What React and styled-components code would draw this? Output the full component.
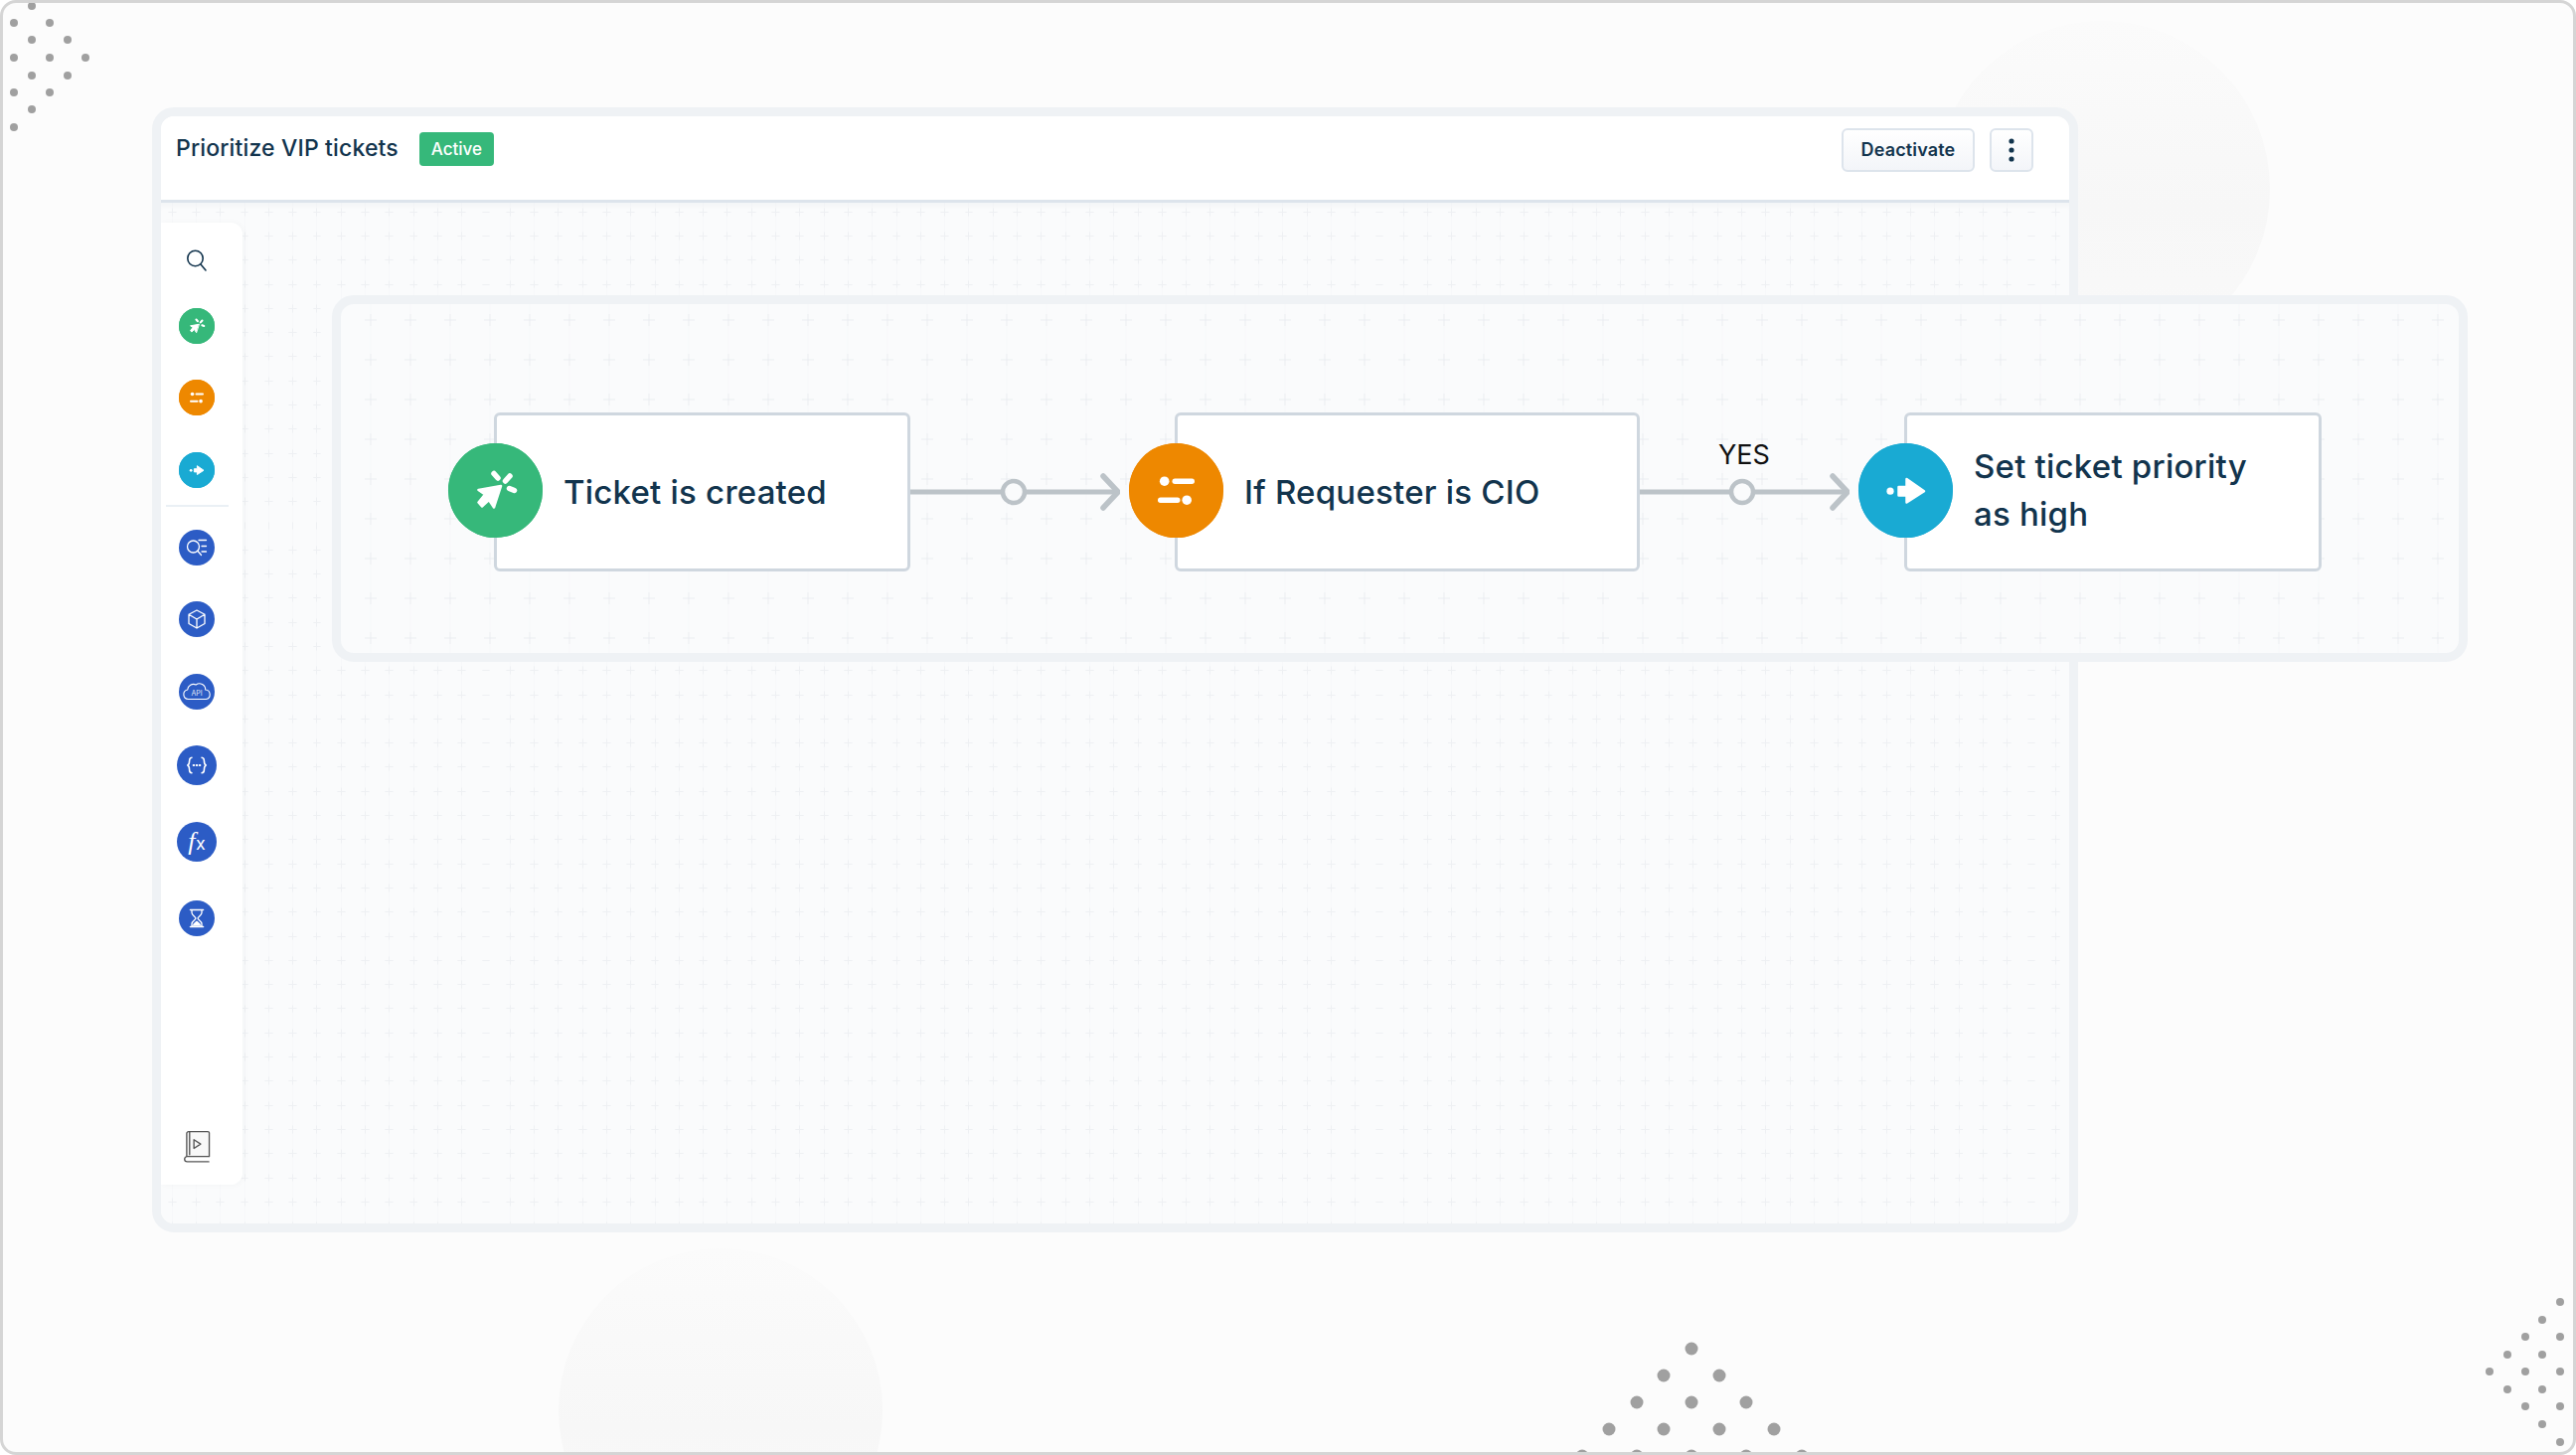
import React from "react";
import styled, { createGlobalStyle } from "styled-components";

const INK = "#12344d";
const GREEN = "#36b87a";
const ORANGE = "#ee8800";
const CYAN = "#19aad3";
const BLUE = "#2c5cc5";

const plusTile = (size, arm, color) => {
  const c = size / 2;
  const svg = `<svg xmlns='http://www.w3.org/2000/svg' width='${size}' height='${size}'><path d='M${c} 0V${size}' stroke='#f7f8fa' stroke-width='1'/><path d='M${c - arm} ${c}H${c + arm}M${c} ${c - arm}V${c + arm}' stroke='${color}' stroke-width='1'/></svg>`;
  return `url("data:image/svg+xml,${encodeURIComponent(svg)}")`;
};

const GlobalStyle = createGlobalStyle`
  html, body {
    margin: 0;
    padding: 0;
    background: #fff;
  }
  body {
    font-family: Inter, "Liberation Sans", sans-serif;
    color: ${INK};
  }
`;

const Frame = styled.div`
  position: relative;
  box-sizing: border-box;
  width: 2592px;
  height: 1464px;
  padding: 105px 0 0 150px;
  overflow: hidden;
  background: #fcfcfc;
  border: 3px solid #d5d5d5;
  border-radius: 16px;
`;

const Blob = styled.div`
  position: absolute;
  left: ${(p) => p.$x - p.$r - 3}px;
  top: ${(p) => p.$y - p.$r - 3}px;
  width: ${(p) => p.$r * 2}px;
  height: ${(p) => p.$r * 2}px;
  border-radius: 50%;
  background: linear-gradient(to bottom, #fbfbfb, #f7f7f7 55%, #f9f9f9);
`;

const DotField = styled.svg`
  position: absolute;
  left: -3px;
  top: -3px;
  width: 2592px;
  height: 1464px;
`;

const EditorWindow = styled.div`
  position: relative;
  box-sizing: border-box;
  width: 1938px;
  height: 1132px;
  display: flex;
  flex-direction: column;
  overflow: hidden;
  border: 9px solid #eff2f5;
  border-radius: 22px;
`;

const Header = styled.header`
  box-sizing: border-box;
  flex: none;
  height: 87px;
  display: flex;
  align-items: flex-start;
  justify-content: space-between;
  padding: 12px 36px 0 15px;
  background: #fff;
  border-bottom: 3px solid #dde4ec;
`;

const TitleGroup = styled.div`
  display: flex;
  align-items: center;
  gap: 21px;
  margin-top: 4px;
`;

const Title = styled.h1`
  margin: -2px 0 0;
  font-size: 23px;
  font-weight: 500;
  letter-spacing: 0.15px;
  color: ${INK};
`;

const StatusBadge = styled.span`
  box-sizing: border-box;
  width: 75px;
  height: 34px;
  display: flex;
  align-items: center;
  justify-content: center;
  border-radius: 4px;
  background: ${GREEN};
  color: #fff;
  font-size: 17px;
  font-weight: 500;
`;

const Actions = styled.div`
  display: flex;
  gap: 15px;
`;

const Button = styled.button`
  box-sizing: border-box;
  height: 44px;
  width: ${(p) => p.$width}px;
  display: flex;
  align-items: center;
  justify-content: center;
  padding: 0 0 1px;
  border: 2px solid #dde4ec;
  border-radius: 6px;
  background: linear-gradient(to bottom, #fff, #f3f5f9);
  color: ${INK};
  font-family: inherit;
  font-size: 18px;
  font-weight: 600;
  letter-spacing: 0.15px;
`;

const Canvas = styled.div`
  flex: 1;
  display: flex;
  align-items: flex-start;
  padding-top: 20px;
  background-color: #fafbfc;
  background-image: ${plusTile(24.3, 4, "#eef0f3")};
  background-position: -1px -3px;
  box-shadow: inset 0 6px 6px -4px rgba(18, 52, 77, 0.04);
`;

const Palette = styled.aside`
  box-sizing: border-box;
  width: 82px;
  height: 968px;
  display: flex;
  flex-direction: column;
  align-items: center;
  padding: 0 10px 0 0;
  background: rgba(255, 255, 255, 0.95);
  border-radius: 0 12px 12px 0;
  box-shadow: 2px 0 6px rgba(18, 52, 77, 0.03);
`;

const PaletteSlot = styled.div`
  flex: none;
  height: ${(p) => p.$height}px;
  display: flex;
  align-items: center;
  justify-content: center;
`;

const PaletteDivider = styled.div`
  flex: none;
  width: 63px;
  height: 2px;
  background: #eaf0f5;
`;

const PaletteSpacer = styled.div`
  flex: 1;
`;

const IconDisc = styled.span`
  flex: none;
  display: block;
  width: ${(p) => p.$size}px;
  height: ${(p) => p.$size}px;
  border-radius: 50%;
  background: ${(p) => p.$color};
`;

const DiscSvg = styled.svg`
  display: block;
  width: 100%;
  height: 100%;
`;

const FlowPanel = styled.section`
  position: absolute;
  left: 331px;
  top: 294px;
  box-sizing: border-box;
  width: 2149px;
  height: 369px;
  display: flex;
  align-items: flex-start;
  padding: 109px 0 0 108px;
  background-color: #fafbfc;
  background-image: ${plusTile(40, 6, "#ebeef1")};
  background-position: 10px -4px;
  border: 9px solid #eff2f5;
  border-radius: 22px;
`;

const Node = styled.div`
  flex: none;
  display: flex;
  align-items: center;
`;

const NodeDisc = styled(IconDisc)`
  position: relative;
  z-index: 1;
  margin: 0 -49px 4px 0;
`;

const NodeCard = styled.div`
  box-sizing: border-box;
  width: ${(p) => p.$width}px;
  height: 160px;
  display: flex;
  align-items: center;
  padding: 0 0 ${(p) => (p.$twoLines ? 5 : 0)}px 67px;
  background: #fff;
  border: 3px solid #cfd7df;
  border-radius: 6px;
  font-size: 33px;
  font-weight: 450;
  line-height: 48px;
  letter-spacing: 0.22px;
  color: ${INK};
`;

const Connector = styled.div`
  position: relative;
  flex: none;
  width: 211px;
  height: 160px;
  margin-right: 9px;
`;

const ConnectorSvg = styled.svg`
  display: block;
  width: 211px;
  height: 160px;
`;

const EdgeLabel = styled.span`
  position: absolute;
  left: 79px;
  top: 27px;
  font-size: 27px;
  line-height: 32px;
  color: #111;
`;

const DOTS = {
  small: [
    [32, 6], [14, 23], [50, 23], [32, 40], [68, 40], [14, 58], [50, 58], [86, 58],
    [32, 76], [68, 76], [14, 93], [50, 93], [32, 110], [14, 128],
    [2576, 1310], [2558, 1328], [2541, 1345], [2576, 1345], [2523, 1363], [2558, 1363],
    [2505, 1380], [2541, 1380], [2576, 1380], [2523, 1398], [2558, 1398], [2541, 1415],
    [2576, 1415], [2558, 1433], [2576, 1451],
  ],
  large: [
    [1702, 1357], [1674, 1384], [1730, 1384], [1647, 1411], [1702, 1411], [1757, 1411],
    [1619, 1438], [1674, 1438], [1730, 1438], [1785, 1438],
    [1592, 1465], [1647, 1465], [1702, 1465], [1757, 1465], [1813, 1465],
  ],
};

// node glyphs share one 95 unit box so the palette can reuse them scaled down
const TriggerGlyph = () => (
  <g fill="#fff" stroke="#fff" strokeLinecap="round" strokeLinejoin="round">
    <path d="M5.5 -4.5 L-17 -0.5 L-10.5 4 L-17 12 L-13.5 16 L-6.5 9.5 L-1.5 17 Z" strokeWidth="2.5" />
    <path d="M-1.5 -17 L2.5 -12.5 M14.5 -14.5 L10 -9.5 M14 -2 L19 0" strokeWidth="5.5" fill="none" />
  </g>
);

const ConditionGlyph = () => (
  <g fill="#fff">
    <circle cx="-11.8" cy="-9.3" r="4.8" />
    <rect x="-4" y="-12" width="22.5" height="5.4" rx="2.7" />
    <rect x="-18.5" y="7" width="22.5" height="5.4" rx="2.7" />
    <circle cx="10.7" cy="9.7" r="4.8" />
  </g>
);

const ActionGlyph = () => (
  <g fill="#fff" stroke="#fff" strokeLinejoin="round">
    <circle cx="-15.5" cy="0.7" r="3.6" stroke="none" />
    <path d="M-7 -3.5 H1 V-11.5 L18.5 0.7 L1 12 V5 H-7 Z" strokeWidth="2.5" />
  </g>
);

const NodeIcon = ({ color, children }) => (
  <DiscSvg viewBox="-47.5 -47.5 95 95" aria-hidden="true">
    <circle r="47.5" fill={color} />
    {children}
  </DiscSvg>
);

const SearchIcon = () => (
  <svg width="22" height="24" viewBox="0 0 22 24" fill="none" stroke={INK} strokeWidth="1.6" strokeLinecap="round">
    <circle cx="9.5" cy="10" r="7.7" />
    <path d="M15 16 L20 22" />
  </svg>
);

const StrokeDisc = ({ size, children }) => (
  <IconDisc $size={size} $color={BLUE}>
    <DiscSvg viewBox="0 0 36 36" fill="none" stroke="#fff" strokeWidth="1.1" strokeLinecap="round" strokeLinejoin="round">
      {children}
    </DiscSvg>
  </IconDisc>
);

const BookIcon = () => (
  <svg width="27" height="34" viewBox="0 0 28 34" fill="none" stroke="#555" strokeWidth="1.4" strokeLinejoin="round" strokeLinecap="round">
    <rect x="3" y="1" width="23.5" height="26" fill="#f8f8f8" stroke="none" />
    <path d="M3 27 V3 a2 2 0 0 1 2 -2 H25 a1.5 1.5 0 0 1 1.5 1.5 V27 H3.5 a2.5 2.5 0 0 0 0 5.5 H26" />
    <path d="M6 2 V25" />
    <path d="M10.5 9.5 L17.5 14 L10.5 18.5 Z" />
  </svg>
);

const KebabIcon = () => (
  <svg width="6" height="24" viewBox="0 0 6 24" fill={INK}>
    <circle cx="3" cy="3" r="2.6" />
    <circle cx="3" cy="12" r="2.6" />
    <circle cx="3" cy="21" r="2.6" />
  </svg>
);

const Arrow = ({ knobAt, label }) => (
  <>
    <ConnectorSvg viewBox="0 0 211 160" fill="none" stroke="#bcc3c8" strokeLinecap="round" strokeLinejoin="round">
      <path d={`M0 80 H${knobAt - 12} M${knobAt + 12} 80 H207`} strokeWidth="5" strokeLinecap="butt" />
      <circle cx={knobAt} cy="80" r="11" strokeWidth="4.5" />
      <path d="M194 64 L209 80 L194 96" strokeWidth="5.5" />
    </ConnectorSvg>
    {label && <EdgeLabel>{label}</EdgeLabel>}
  </>
);

const App = () => (
  <>
    <GlobalStyle />
    <Frame>
      <Blob $x={2115} $y={190} $r={169} />
      <Blob $x={725} $y={1419} $r={163} />
      <DotField viewBox="0 0 2592 1464" fill="#a0a0a0" aria-hidden="true">
        {DOTS.small.map(([x, y]) => (
          <circle key={`s${x}-${y}`} cx={x} cy={y} r="4" />
        ))}
        {DOTS.large.map(([x, y]) => (
          <circle key={`l${x}-${y}`} cx={x} cy={y} r="6.5" />
        ))}
      </DotField>

      <EditorWindow>
        <Header>
          <TitleGroup>
            <Title>Prioritize VIP tickets</Title>
            <StatusBadge>Active</StatusBadge>
          </TitleGroup>
          <Actions>
            <Button $width={134}>Deactivate</Button>
            <Button $width={44} aria-label="More">
              <KebabIcon />
            </Button>
          </Actions>
        </Header>
        <Canvas>
          <Palette>
            <PaletteSlot $height={76}>
              <SearchIcon />
            </PaletteSlot>
            <PaletteSlot $height={56}>
              <IconDisc $size={36} $color={GREEN}>
                <NodeIcon color={GREEN}><TriggerGlyph /></NodeIcon>
              </IconDisc>
            </PaletteSlot>
            <PaletteSlot $height={88}>
              <IconDisc $size={36} $color={ORANGE}>
                <NodeIcon color={ORANGE}><ConditionGlyph /></NodeIcon>
              </IconDisc>
            </PaletteSlot>
            <PaletteSlot $height={58}>
              <IconDisc $size={36} $color={CYAN}>
                <NodeIcon color={CYAN}><ActionGlyph /></NodeIcon>
              </IconDisc>
            </PaletteSlot>
            <PaletteSlot $height={6} />
            <PaletteDivider />
            <PaletteSlot $height={82}>
              <StrokeDisc size={36}>
                <circle cx="14.5" cy="17" r="6" strokeWidth="1.3" />
                <path d="M19 21.5 L22.5 25.5 M20 10.5 H27.5 M23 16.5 H27.5 M23 22 H27.5" strokeWidth="1.3" />
              </StrokeDisc>
            </PaletteSlot>
            <PaletteSlot $height={62}>
              <StrokeDisc size={36}>
                <path d="M18 9 L26 13.3 V22.5 L18 27 L10 22.5 V13.3 Z M10 13.3 L18 18 L26 13.3 M18 18 V27" strokeWidth="1.3" />
              </StrokeDisc>
            </PaletteSlot>
            <PaletteSlot $height={84}>
              <StrokeDisc size={36}>
                <path d="M9.5 25.5 a4.8 4.8 0 0 1 -0.8 -9.5 a6 6 0 0 1 8.5 -5 a6 6 0 0 1 9.5 5 a4.8 4.8 0 0 1 0.6 9.5 Z" strokeWidth="1.1" />
                <text x="18" y="22" textAnchor="middle" fontFamily="Inter, sans-serif" fontSize="7" fill="#fff" stroke="none" opacity="0.85">API</text>
              </StrokeDisc>
            </PaletteSlot>
            <PaletteSlot $height={64}>
              <StrokeDisc size={40}>
                <path d="M13.5 11 c-2 0 -2.2 1.2 -2.2 3.2 c0 2 -0.4 3.2 -1.6 3.8 c1.2 0.6 1.6 1.8 1.6 3.8 c0 2 0.2 3.2 2.2 3.2 M22.5 11 c2 0 2.2 1.2 2.2 3.2 c0 2 0.4 3.2 1.6 3.8 c-1.2 0.6 -1.6 1.8 -1.6 3.8 c0 2 -0.2 3.2 -2.2 3.2" strokeWidth="1.4" />
                <path d="M15 18 H21" strokeWidth="1.8" strokeDasharray="0.5 2.25" />
              </StrokeDisc>
            </PaletteSlot>
            <PaletteSlot $height={90}>
              <StrokeDisc size={40}>
                <text x="18" y="25" textAnchor="middle" fill="#fff" stroke="none">
                  <tspan fontFamily="'Liberation Serif', serif" fontStyle="italic" fontSize="23">f</tspan>
                  <tspan fontFamily="Inter, sans-serif" fontSize="16" dx="0.5">x</tspan>
                </text>
              </StrokeDisc>
            </PaletteSlot>
            <PaletteSlot $height={64}>
              <StrokeDisc size={36}>
                <path d="M11.5 9.5 H24.5 M11.5 26.5 H24.5" strokeWidth="1.6" />
                <path d="M13 10 V12.5 C13 15 17 16.5 17 18 C17 19.5 13 21 13 23.5 V26 H23 V23.5 C23 21 19 19.5 19 18 C19 16.5 23 15 23 12.5 V10" strokeWidth="1.3" />
                <path d="M14 25 C14 23 17 21.5 18 20.5 C19 21.5 22 23 22 25 Z" fill="#fff" stroke="none" />
              </StrokeDisc>
            </PaletteSlot>
            <PaletteSpacer />
            <PaletteSlot $height={34}>
              <BookIcon />
            </PaletteSlot>
            <PaletteSlot $height={21} />
          </Palette>
        </Canvas>
      </EditorWindow>

      <FlowPanel>
        <Node>
          <NodeDisc $size={95} $color={GREEN}>
            <NodeIcon color={GREEN}><TriggerGlyph /></NodeIcon>
          </NodeDisc>
          <NodeCard $width={419}>Ticket is created</NodeCard>
        </Node>
        <Connector>
          <Arrow knobAt={104} />
        </Connector>
        <Node>
          <NodeDisc $size={95} $color={ORANGE}>
            <NodeIcon color={ORANGE}><ConditionGlyph /></NodeIcon>
          </NodeDisc>
          <NodeCard $width={468}>If Requester is CIO</NodeCard>
        </Node>
        <Connector>
          <Arrow knobAt={103} label="YES" />
        </Connector>
        <Node>
          <NodeDisc $size={95} $color={CYAN}>
            <NodeIcon color={CYAN}><ActionGlyph /></NodeIcon>
          </NodeDisc>
          <NodeCard $width={420} $twoLines>
            <span>
              Set ticket priority
              <br />
              as high
            </span>
          </NodeCard>
        </Node>
      </FlowPanel>
    </Frame>
  </>
);

export default App;
